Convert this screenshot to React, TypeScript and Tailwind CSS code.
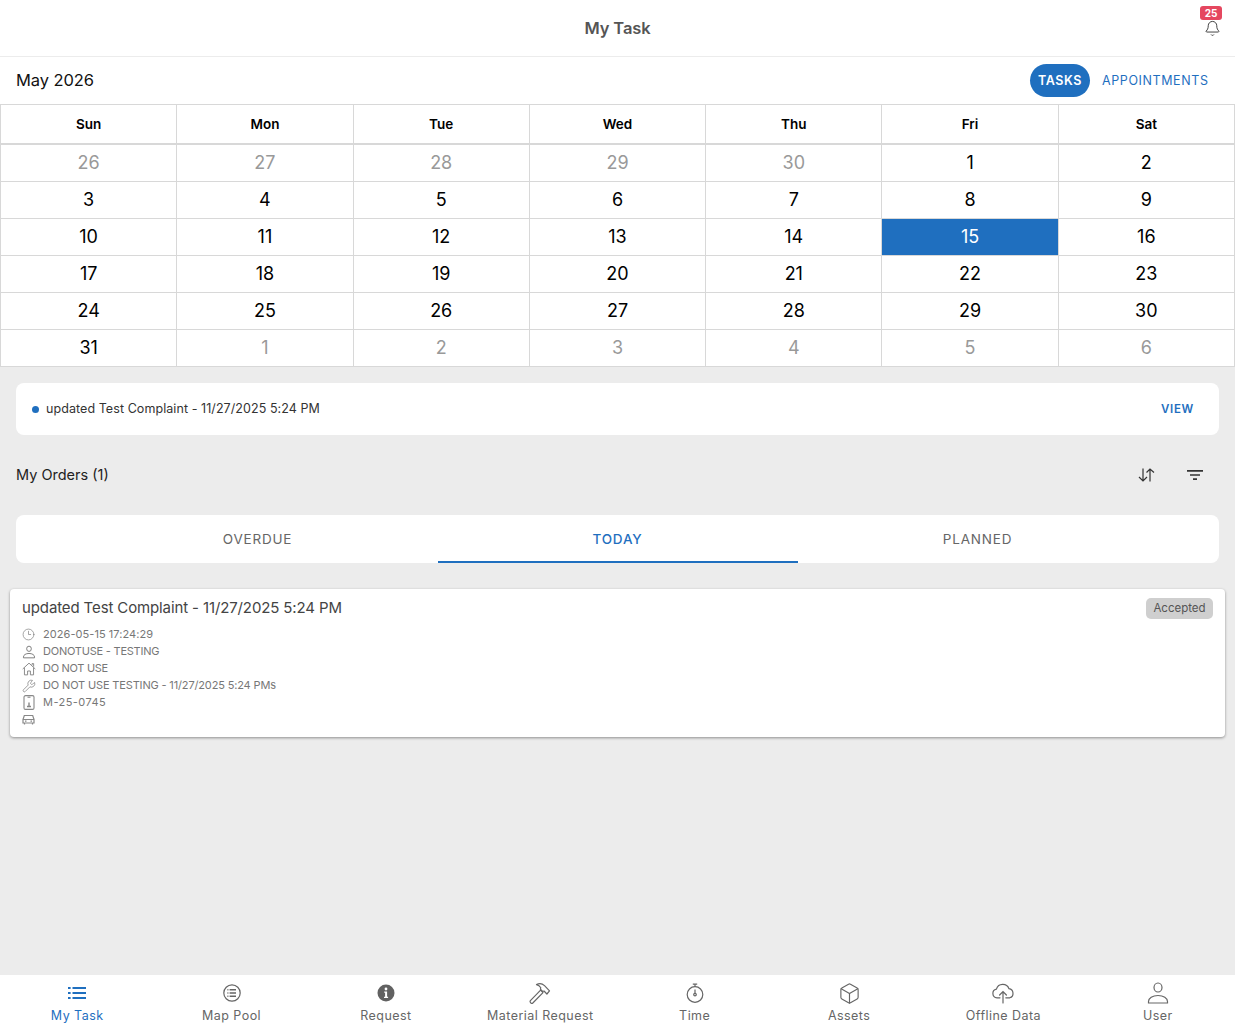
import React from "react";
import { Clock3, Wrench, Box, Bell } from "lucide-react";

const font = "font-['Inter','Liberation_Sans',sans-serif]";
const weeks: [string, boolean][][] = [
  [["26", true], ["27", true], ["28", true], ["29", true], ["30", true], ["1", false], ["2", false]],
  [["3", false], ["4", false], ["5", false], ["6", false], ["7", false], ["8", false], ["9", false]],
  [["10", false], ["11", false], ["12", false], ["13", false], ["14", false], ["15", false], ["16", false]],
  [["17", false], ["18", false], ["19", false], ["20", false], ["21", false], ["22", false], ["23", false]],
  [["24", false], ["25", false], ["26", false], ["27", false], ["28", false], ["29", false], ["30", false]],
  [["31", false], ["1", true], ["2", true], ["3", true], ["4", true], ["5", true], ["6", true]],
];
const days = ["Sun", "Mon", "Tue", "Wed", "Thu", "Fri", "Sat"];

function MapPoolIcon() {
  return (
    <svg width="20" height="20" viewBox="0 0 20 20" fill="none" stroke="#666" strokeWidth="1.2">
      <circle cx="10" cy="10" r="8.2" />
      <path d="M7.6 6.8H14M7.6 10H14M7.6 13.2H14M5.4 6.8h1M5.4 10h1M5.4 13.2h1" strokeWidth="1.4" />
    </svg>
  );
}
function InfoIcon() {
  return (
    <svg width="18" height="18" viewBox="0 0 18 18">
      <circle cx="9" cy="9" r="8.5" fill="#616161" />
      <circle cx="9" cy="5" r="1.4" fill="#fff" />
      <path d="M7.2 7.6h2.9v5.2h1v1.2H7v-1.2h1.1V8.8H7.2z" fill="#fff" />
    </svg>
  );
}
function TaskListIcon() {
  return (
    <svg width="18" height="14" viewBox="0 0 18 14" fill="none" stroke="#1f6fbf" strokeWidth="2">
      <path d="M0 2h2.6M0 7h2.6M0 12h2.6" />
      <path d="M4.5 2H18M4.5 7H18M4.5 12H18" />
    </svg>
  );
}
function HammerIcon() {
  return (
    <svg width="22" height="22" viewBox="0 0 22 22" fill="none" stroke="#666" strokeWidth="1.2" strokeLinejoin="round">
      <path d="M1.4 18.6 11.6 8.2l2.4 2.4L3.8 21c-.7.6-1.6.4-2.1-.2-.6-.6-.8-1.5-.3-2.2z" />
      <path d="M7.5 2.6c3-1.6 6-.8 8 1l5 5.2-2.6 3.2-2.9-3-1.4.5-2.2-2.3.4-1.5C10.800 4 9.300 3 7.500 2.600z" />
    </svg>
  );
}
function StopwatchIcon() {
  return (
    <svg width="20" height="22" viewBox="0 0 20 22" fill="none" stroke="#666" strokeWidth="1.2">
      <circle cx="10" cy="12.500" r="7.800" />
      <path d="M7.800 2.200h4.400M10 2.200v2.500M10 7.500v3.600" />
      <circle cx="10" cy="12.600" r="1.300" />
    </svg>
  );
}
function CloudIcon() {
  return (
    <svg width="24" height="21" viewBox="0 0 24 21" fill="none" stroke="#666" strokeWidth="1.2" strokeLinecap="round">
      <path d="M9 14.800H6a4.400 4.400 0 0 1-.6-8.700A6.700 6.700 0 0 1 18 5.700a4.700 4.700 0 0 1 .8 9.100h-4" />
      <path d="M12 20V8.500M8.600 12 12 8.500l3.400 3.500" />
    </svg>
  );
}
function PersonIcon({ size = 24 }: { size?: number }) {
  return (
    <svg width={size} height={size} viewBox="0 0 24 24" fill="none" stroke="currentColor" strokeWidth={size < 20 ? 1.6 : 1.2}>
      <ellipse cx="12" cy="6.500" rx="4" ry="4.500" />
      <path d="M2.500 22v-1.500c0-3.500 4-6 9.500-6s9.500 2.500 9.500 6V22z" />
    </svg>
  );
}
function HouseIcon() {
  return (
    <svg width="14" height="14" viewBox="0 0 16 16" fill="none" stroke="#888" strokeWidth="1.100" strokeLinejoin="round">
      <path d="M.8 8 8 1.300 15.200 8M2.800 6.500v8.200h3.600v-4.400h3.200v4.400h3.600V6.500M11.500 3.600V1.800h1.800v3.500" />
    </svg>
  );
}
function DeviceIcon() {
  return (
    <svg width="14" height="15" viewBox="0 0 14 15" fill="none" stroke="#888" strokeWidth="1.100">
      <rect x="2" y=".6" width="10" height="13.800" rx="1.500" />
      <path d="M5.500 2.200h3" />
      <path d="M7 7.500v3.500M5 11.500h4" strokeWidth="1.400" />
    </svg>
  );
}
function CarIcon() {
  return (
    <svg width="13" height="11" viewBox="0 0 13 11" fill="none" stroke="#888" strokeWidth="1.200">
      <path d="M1 5.500 2.300 1.500h8.400L12 5.500M1 5.500h11v3.500H1zM2.500 9v1.500M10.500 9v1.500" />
      <path d="M3 7.200h1.500M8.500 7.200H10" />
    </svg>
  );
}
function SortIcon() {
  return (
    <svg width="17" height="14" viewBox="0 0 17 14" fill="none" stroke="#333" strokeWidth="1.200">
      <path d="M5 .5V13M1 9l4 4 4-4" />
      <path d="M12 13.500V1M8.500 4.500 12 1l4 3.500" />
    </svg>
  );
}
function FilterIcon() {
  return (
    <svg width="16" height="10" viewBox="0 0 16 10" fill="none" stroke="#333" strokeWidth="1.700">
      <path d="M0 .9h16M3 5h10M6 9.100h4" />
    </svg>
  );
}

const nav: { label: string; icon: React.ReactNode; active?: boolean }[] = [
  { label: "My Task", active: true, icon: <TaskListIcon /> },
  { label: "Map Pool", icon: <MapPoolIcon /> },
  { label: "Request", icon: <InfoIcon /> },
  { label: "Material Request", icon: <HammerIcon /> },
  { label: "Time", icon: <StopwatchIcon /> },
  { label: "Assets", icon: <Box size={23} color="#666" strokeWidth={1.2} /> },
  { label: "Offline Data", icon: <CloudIcon /> },
  { label: "User", icon: <PersonIcon /> },
];

const meta: [React.ReactNode, string, string][] = [
  [<Clock3 size={13} strokeWidth={1.2} />, "2026-05-15 17:24:29", "tracking-[0.06px]"],
  [<PersonIcon size={14} />, "DONOTUSE - TESTING", "tracking-[-0.22px]"],
  [<HouseIcon />, "DO NOT USE", "tracking-[-0.3px]"],
  [<Wrench size={14} strokeWidth={1.2} />, "DO NOT USE TESTING - 11/27/2025 5:24 PMs", "tracking-[-0.15px]"],
  [<DeviceIcon />, "M-25-0745", "tracking-[0.45px]"],
  [<CarIcon />, "", ""],
];

export default function App() {
  return (
    <div className={`${font} w-[1235px] h-[1031px] bg-[#ececec] flex flex-col overflow-hidden`}>
      <header className="h-[57px] bg-white border-b border-[#ececec] flex items-center justify-center relative shrink-0">
        <h1 className="text-[16.5px] font-semibold text-[#555] tracking-[-0.1px]">My Task</h1>
        <Bell size={17} color="#333" strokeWidth={1.3} className="absolute left-[1204px] top-[20px]" />
        <div className="absolute left-[1200px] top-[6px] w-[22px] h-[14px] rounded-[3px] bg-[#e5475f] text-white text-[10px] font-bold leading-[14px] text-center">25</div>
      </header>

      <div className="h-[47px] bg-white flex items-center justify-between pl-4 pr-[26px] shrink-0">
        <span className="text-[16.5px] text-[#111] tracking-[-0.1px]">May 2026</span>
        <div className="flex items-center gap-3">
          <span className="h-[33px] w-[60px] rounded-full bg-[#1f6fbf] text-white text-[12.5px] font-semibold tracking-[0.6px] pt-px flex items-center justify-center">TASKS</span>
          <span className="text-[12.5px] text-[#1f6fbf] font-normal tracking-[0.6px] w-[107px] pt-px">APPOINTMENTS</span>
        </div>
      </div>

      <div className="bg-white border-t border-l border-[#d8d8d8] grid grid-cols-7 shrink-0 h-[263px] grid-rows-[40px_repeat(6,37px)] w-[1235px]">
        {days.map((d) => (
          <div key={d} className="border-r border-b-2 border-[#d8d8d8] flex items-center justify-center text-[13.5px] font-semibold text-black">{d}</div>
        ))}
        {weeks.flat().map(([n, muted], i) => {
          const sel = i === 19;
          return (
            <div key={i} className={`border-r border-b border-[#d8d8d8] flex items-center justify-center pb-[2px] text-[18px] ${sel ? "bg-[#1f6fbf] text-white" : muted ? "text-[#999]" : "text-black"}`}>{n}</div>
          );
        })}
      </div>

      <div className="flex-1 flex flex-col px-4 pt-4">
        <div className="h-[52px] bg-white rounded-lg flex items-center justify-between pl-4 pr-[25px] shrink-0">
          <div className="flex items-center gap-[7px]">
            <span className="w-[7px] h-[7px] rounded-full bg-[#1f6fbf]" />
            <span className="text-[12.5px] text-[#333] tracking-[0.07px]">updated Test Complaint - 11/27/2025 5:24 PM</span>
          </div>
          <span className="text-[11.5px] font-semibold text-[#1f6fbf] tracking-[0.7px] pt-px">VIEW</span>
        </div>

        <div className="h-[80px] flex items-center justify-between pr-4 shrink-0">
          <span className="text-[14.5px] text-[#222]">My Orders (1)</span>
          <div className="flex items-center gap-[32px]">
            <SortIcon />
            <FilterIcon />
          </div>
        </div>

        <div className="h-[48px] bg-white rounded-lg flex justify-center shrink-0">
          {["OVERDUE", "TODAY", "PLANNED"].map((t) => (
            <div key={t} className={`w-[360px] flex items-center justify-center text-[13.5px] tracking-[0.8px] ${t === "TODAY" ? "text-[#1f6fbf] border-b-2 border-[#1f6fbf] font-medium pt-[2px]" : "text-[#666]"}`}>{t}</div>
          ))}
        </div>

        <div className="-mx-[6px] mt-[26px] h-[148px] bg-white rounded-[4px] shadow-[0_1px_3px_rgba(0,0,0,0.4)] px-3 pt-[10px] shrink-0">
          <div className="flex justify-between items-start">
            <span className="text-[15px] text-[#444] leading-[18px] tracking-[-0.12px]">updated Test Complaint - 11/27/2025 5:24 PM</span>
            <span className="h-[21px] w-[67px] -mt-px rounded-[5px] bg-[#cfcfcf] text-[#555] text-[11.5px] flex items-center justify-center">Accepted</span>
          </div>
          <div className="flex flex-col mt-[7px]">
            {meta.map(([ic, t, tr], i) => (
              <div key={i} className={`h-[17px] flex items-center text-[11px] text-[#777] ${tr}`}>
                <span className="w-[21px] flex justify-start text-[#777]">{ic}</span>
                <span>{t}</span>
              </div>
            ))}
          </div>
        </div>
      </div>

      <nav className="h-[56px] bg-white grid grid-cols-8 shrink-0 px-0">
        {nav.map((n) => (
          <div key={n.label} className={`flex flex-col items-center justify-start pt-[6px] ${n.active ? "text-[#1f6fbf]" : "text-[#666]"}`}>
            <div className="h-[24px] flex items-center justify-center">{n.icon}</div>
            <span className="text-[12.5px] mt-[3px] leading-[16px] tracking-[0.45px]">{n.label}</span>
          </div>
        ))}
      </nav>
    </div>
  );
}
